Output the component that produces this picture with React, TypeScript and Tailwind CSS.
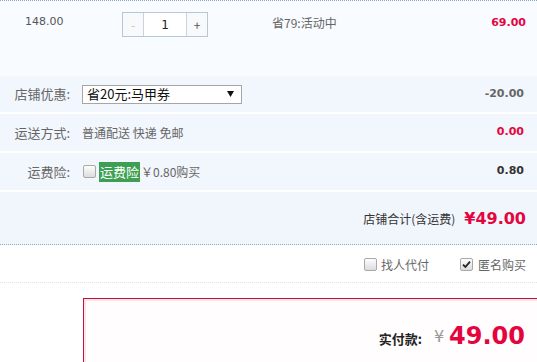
import React, { useState } from 'react';

const cjk = { fontFamily: '"Noto Sans CJK SC", "Noto Sans", sans-serif' };
const num = { fontFamily: '"DejaVu Sans", Verdana, sans-serif' };

const Checkbox: React.FC<{ checked?: boolean; onClick?: () => void }> = ({ checked, onClick }) => (
  <span
    onClick={onClick}
    className="inline-flex w-[13px] h-[13px] items-center justify-center rounded-[2px] border border-[#a9a9a9] bg-gradient-to-b from-[#fdfdfd] to-[#dcdcdc] cursor-pointer"
  >
    {checked && (
      <svg width="9" height="9" viewBox="0 0 9 9">
        <path d="M1 4.6 L3.4 7 L8 1.6" fill="none" stroke="#222" strokeWidth="1.8" />
      </svg>
    )}
  </span>
);

export default function App() {
  const [qty, setQty] = useState(1);
  const [insure, setInsure] = useState(false);
  const [proxyPay, setProxyPay] = useState(false);
  const [anonymous, setAnonymous] = useState(true);

  return (
    <div className="w-[537px] h-[362px] overflow-hidden bg-white text-[12px] text-[#666]" style={cjk}>
      {/* item row */}
      <div className="h-[76px] flex items-start pt-[11px] bg-[#f8fbff] border-t border-dotted border-[#8ea6c2]">
        <div className="w-[122px] pl-[25px] pt-[2px] text-[11px] text-[#555]" style={num}>148.00</div>
        <div className="flex h-[25px] border border-[#b8c7d6] bg-white">
          <button onClick={() => setQty(Math.max(1, qty - 1))} className="w-[21px] bg-[#f7f9fb] text-[#c4c4c4] border-r border-[#c9d4df] leading-none">-</button>
          <div className="w-[42px] flex items-center justify-center text-[12px] text-[#222]" style={num}>{qty}</div>
          <button onClick={() => setQty(qty + 1)} className="w-[21px] bg-[#f7f9fb] text-[#555] border-l border-[#c9d4df] leading-none">+</button>
        </div>
        <div className="ml-[64px] pt-[2px] flex-1 text-[#666]">省79:活动中</div>
        <div className="pr-[11px] pt-[3px] text-[11px] font-bold text-[#e4053f]" style={num}>69.00</div>
      </div>

      {/* shop discount */}
      <div className="h-[38px] flex items-center bg-[#f2f6fd] border-b-2 border-white">
        <div className="w-[70px] text-right text-[13px]">店铺优惠:</div>
        <div className="ml-[12px] w-[160px] h-[19px] flex items-center justify-between border border-[#a6a6a6] bg-white pl-[4px] pr-[7px] text-[13px] text-[#111]">
          <span>省20元:马甲券</span>
          <svg width="7" height="6" viewBox="0 0 7 6"><path d="M0 0 H7 L3.5 6 Z" fill="#111" /></svg>
        </div>
        <div className="ml-auto pr-[13px] text-[11px] font-bold text-[#666]" style={num}>-20.00</div>
      </div>

      {/* shipping */}
      <div className="h-[39px] flex items-center bg-[#f2f6fd] border-b-2 border-white">
        <div className="w-[70px] text-right text-[13px]">运送方式:</div>
        <div className="ml-[12px]">普通配送 快递 免邮</div>
        <div className="ml-auto pr-[13px] text-[11px] font-bold text-[#e4053f]" style={num}>0.00</div>
      </div>

      {/* freight insurance */}
      <div className="h-[39px] flex items-center bg-[#f2f6fd] border-b-2 border-white">
        <div className="w-[70px] text-right text-[13px]">运费险:</div>
        <div className="ml-[13px] flex items-center">
          <Checkbox checked={insure} onClick={() => setInsure(!insure)} />
          <span className="ml-[3px] px-[1px] h-[20px] leading-[20px] bg-[#3d9f52] text-white text-[13px]">运费险</span>
          <span className="ml-[1px]">￥0.80购买</span>
        </div>
        <div className="ml-auto pr-[13px] text-[11px] font-bold text-[#333]" style={num}>0.80</div>
      </div>

      {/* shop total */}
      <div className="h-[53px] flex items-center justify-end pr-[11px] pt-[2px] bg-[#f1f6fd] border-b border-dotted border-[#8ea6c2]">
        <span className="text-[#333]">店铺合计(含运费)</span>
        <span className="ml-[9px] text-[16px] font-bold text-[#e4053f]" style={num}>¥49.00</span>
      </div>

      {/* options */}
      <div className="h-[38px] flex items-center justify-end pr-[11px] pt-[2px] border-b border-dotted border-[#e3e3e3]">
        <label className="flex items-center">
          <Checkbox checked={proxyPay} onClick={() => setProxyPay(!proxyPay)} />
          <span className="ml-[4px] text-[12px]">找人代付</span>
        </label>
        <label className="ml-[31px] flex items-center">
          <Checkbox checked={anonymous} onClick={() => setAnonymous(!anonymous)} />
          <span className="ml-[5px] text-[12px]">匿名购买</span>
        </label>
      </div>

      {/* pay box */}
      <div className="mt-[15px] ml-[83px] w-[470px] h-[80px] border border-[#c40d42] bg-[#fffdfd] shadow-[inset_2px_2px_0_#fbe6e4] flex items-start justify-end pr-[27px] pt-[22px]">
        <span className="mt-[8px] text-[13px] font-bold text-[#222]">实付款:</span>
        <span className="ml-[12px] mt-[4px] text-[16px] text-[#999]" style={num}>¥</span>
        <span className="ml-[5px] text-[24px] font-bold leading-[30px] text-[#e4053f]" style={num}>49.00</span>
      </div>
    </div>
  );
}
